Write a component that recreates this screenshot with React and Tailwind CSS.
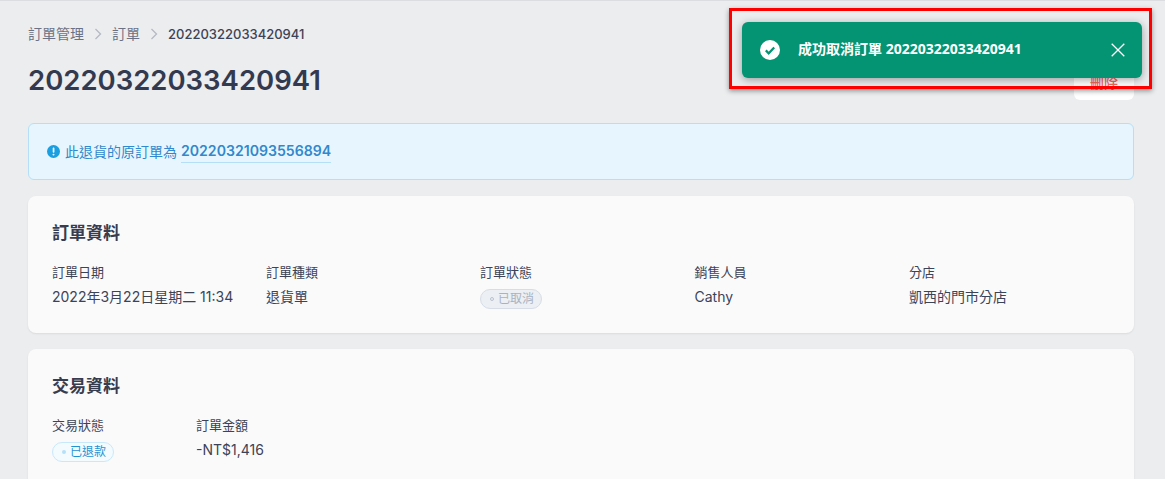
import React from "react";

const font = { fontFamily: '"Inter", "Noto Sans CJK TC", sans-serif' };

function Chevron() {
  return (
    <svg width="20" height="20" viewBox="0 0 20 20" fill="none" stroke="#b4b9c4" strokeWidth="1.3" className="mx-[4px] shrink-0">
      <path d="M7.5 5l5 5-5 5" />
    </svg>
  );
}

function Field({ label, children, className = "" }) {
  return (
    <div className={className}>
      <div className="text-[13px] leading-[18px] text-[#3d4356]">{label}</div>
      <div className="mt-[4px] text-sm leading-[24px] text-[#3d4356]">{children}</div>
    </div>
  );
}

function Card({ title, children, className = "" }) {
  return (
    <section className={`rounded-lg bg-[#fafafb] px-6 pt-[25px] shadow-[0_1px_2px_rgba(0,0,0,0.08)] ${className}`}>
      <h2 className="text-[17px] font-semibold leading-6 text-[#373c4f]">{title}</h2>
      {children}
    </section>
  );
}

export default function App() {
  return (
    <div style={font} className="relative h-[479px] w-[1165px] overflow-hidden bg-[#ecedef]">
      <div className="h-px bg-[#dcdde0]" />
      <main className="pl-[28px] pr-[31px] pt-[23px]">
        <nav className="flex h-5 items-center text-sm text-[#6b7285]">
          <span>訂單管理</span>
          <Chevron />
          <span>訂單</span>
          <Chevron />
          <span className="text-[13px] font-medium text-[#3d4356]">20220322033420941</span>
        </nav>
        <div className="mt-[5px] flex h-[51px] items-start justify-between">
          <h1 className="mt-[11px] text-[27.5px] font-semibold leading-[40px] text-[#333a4f]">20220322033420941</h1>
          <button className="flex h-[33px] w-[60px] items-center justify-center self-end rounded-b-md bg-white pb-px text-sm font-medium text-[#f0695a]">刪除</button>
        </div>
        <div className="mt-[23px] flex h-[57px] items-center rounded-md border border-[#b5dff7] bg-[#e7f6fe] px-[18px] text-sm">
          <svg width="13" height="13" viewBox="0 0 20 20" className="mr-[5px] shrink-0">
            <circle cx="10" cy="10" r="10" fill="#1a9fe0" />
            <rect x="8.8" y="4" width="2.6" height="8" rx="1.2" fill="#fff" />
            <circle cx="10" cy="14.8" r="1.5" fill="#fff" />
          </svg>
          <span className="mt-px text-[#3188cc]">此退貨的原訂單為</span>
          <span className="ml-[4px] mt-px border-b border-[#b5dff7] pb-px text-[14.1px] font-semibold text-[#3188cc]">20220321093556894</span>
        </div>
        <Card title="訂單資料" className="mt-[16px] h-[137px]">
          <div className="mt-[18px] flex">
            <Field label="訂單日期" className="w-[214px]">2022年3月22日星期二 11:34</Field>
            <Field label="訂單種類" className="w-[214px]">退貨單</Field>
            <Field label="訂單狀態" className="w-[214.5px]">
              <span className="mt-[4px] inline-flex h-5 items-center gap-[4px] rounded-full border border-[#d6dde6] bg-[#eceff3] pl-[9px] pr-[7px] align-top text-xs text-[#a9b2c1]">
                <span className="size-[4px] rounded-full border border-[#b9c2cf]" />已取消
              </span>
            </Field>
            <Field label="銷售人員" className="w-[214.5px]">Cathy</Field>
            <Field label="分店">凱西的門市分店</Field>
          </div>
        </Card>
        <Card title="交易資料" className="mt-[16px] h-[140px]">
          <div className="mt-[18px] flex">
            <Field label="交易狀態" className="w-[144px]">
              <span className="mt-[4px] inline-flex h-5 items-center gap-[4px] rounded-full border border-[#c8e9fb] bg-[#f3fbff] pl-[9px] pr-[7px] align-top text-xs text-[#1f93d2]">
                <span className="size-[4px] rounded-full bg-[#b5e0f8]" />已退款
              </span>
            </Field>
            <Field label="訂單金額">-NT$1,416</Field>
          </div>
        </Card>
      </main>

      <div className="absolute left-[742px] top-[22px] flex h-[56px] w-[400px] items-center rounded-md bg-[#059473] pl-[18px] pr-[17px] text-white shadow-[0_2px_8px_rgba(0,0,0,0.35)]" style={{ fontFamily: '"Noto Sans", "Noto Sans CJK TC", sans-serif' }}>
        <svg width="20" height="20" viewBox="0 0 20 20" className="shrink-0">
          <circle cx="10" cy="10" r="10" fill="#fff" />
          <path d="M5.8 10.4l2.9 2.9 5.5-5.9" fill="none" stroke="#059473" strokeWidth="2.2" />
        </svg>
        <span className="mb-[2px] ml-[18px] flex-1 text-sm font-bold">成功取消訂單 20220322033420941</span>
        <svg width="14" height="14" viewBox="0 0 14 14" stroke="#fff" strokeWidth="1.3" className="shrink-0">
          <path d="M.7.7l12.6 12.6M13.3.7L.7 13.3" />
        </svg>
      </div>
      <div className="pointer-events-none absolute left-[729px] top-[8px] h-[81px] w-[423px] border-[3px] border-[#ff0000] shadow-[0_2px_5px_rgba(0,0,0,0.4)]" />
    </div>
  );
}
